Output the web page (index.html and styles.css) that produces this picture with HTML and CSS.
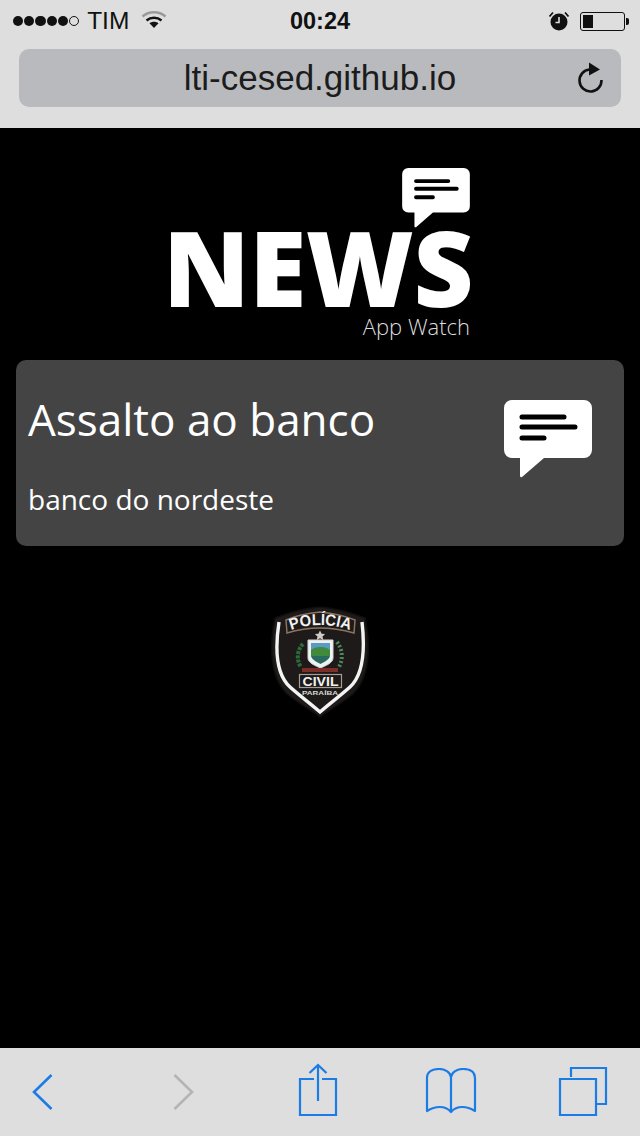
FILE: index.html
```html
<!DOCTYPE html>
<html lang="pt">
<head>
<meta charset="utf-8">
<title>News App Watch</title>
<link rel="stylesheet" href="styles.css">
</head>
<body>
<div class="page">
  <header class="chrome">
    <div class="status">
      <div class="status-left">
        <span class="signal"><i></i><i></i><i></i><i></i><i></i><i class="off"></i></span>
        <span class="carrier">TIM</span>
        <svg class="wifi" width="26" height="20" viewBox="0 0 26 20"><path d="M1.500 6.500C8 .9 18 .9 24.500 6.500" fill="none" stroke="#9a9a9a" stroke-width="2.400"/><path d="M5.500 10.500C9.800 6.800 16.200 6.800 20.500 10.500" fill="none" stroke="#111" stroke-width="2.400"/><path d="M8.500 13.200C11 11.200 15 11.200 17.500 13.200L13 18Z" fill="#111"/></svg>
      </div>
      <div class="time">00:24</div>
      <div class="status-right">
        <svg width="22" height="22" viewBox="0 0 22 22"><circle cx="11" cy="12" r="8.500" fill="#111"/><path d="M11 7v5.500H7.500" fill="none" stroke="#dedede" stroke-width="1.600"/><path d="M1.500 6.500 5 2.500M20.500 6.500 17 2.500" stroke="#111" stroke-width="1.800"/></svg>
        <div class="battery"><div class="battery-level"></div></div>
      </div>
    </div>
    <div class="urlbar">
      <span class="url">lti-cesed.github.io</span>
      <svg class="reload" width="30" height="34" viewBox="0 0 30 34"><path d="M13.500 9.500A11 11 0 1 0 25.500 20" fill="none" stroke="#111" stroke-width="2.600"/><path d="M13 2.500 24 9.500 13 15.500Z" fill="#111"/></svg>
    </div>
  </header>

  <main class="content">
    <div class="logo">
      <svg class="logo-bubble" width="68" height="60" viewBox="0 0 88 78"><path d="M8 0H80a8 8 0 0 1 8 8V50a8 8 0 0 1-8 8H40L18 77a1.500 1.500 0 0 1-2-1V58H8a8 8 0 0 1-8-8V8a8 8 0 0 1 8-8Z" fill="#fff"/><path d="M18 17H60M18 27H71M18 38H40" stroke="#000" stroke-width="5" stroke-linecap="round"/></svg>
      <div class="logo-word">NEWS</div>
      <div class="logo-sub">App Watch</div>
    </div>

    <section class="card">
      <div class="card-text">
        <h1 class="card-title">Assalto ao banco</h1>
        <p class="card-desc">banco do nordeste</p>
      </div>
      <svg class="card-icon" width="88" height="78" viewBox="0 0 88 78"><path d="M8 0H80a8 8 0 0 1 8 8V50a8 8 0 0 1-8 8H40L18 77a1.500 1.500 0 0 1-2-1V58H8a8 8 0 0 1-8-8V8a8 8 0 0 1 8-8Z" fill="#fff"/><path d="M18 17H60M18 27H71M18 38H40" stroke="#000" stroke-width="5" stroke-linecap="round"/></svg>
    </section>

    <svg class="badge" width="100" height="112" viewBox="0 0 100 112">
      <path d="M50 1C65 2 80 6 95 12C101 40 100 72 83 88C72 97 60 104 50 111C40 104 28 97 17 88C0 72 -1 40 5 12C20 6 35 2 50 1Z" fill="#1d1a19" stroke="#0e0e0e" stroke-width="1.500"/>
      <path d="M9 16C5 42 6 68 20 81C30 90 41 98 50 106C59 98 70 90 80 81C94 68 95 42 92 16" fill="none" stroke="#f4f4f4" stroke-width="3.400"/>
      <path d="M16 14C27 9 39 7 50 6C61 7 73 9 85 14L84 27C73 24 61 22 50 22C39 22 27 24 17 27Z" fill="#1d1a19" stroke="#8a7460" stroke-width="1.500"/>
      <path id="badge-arc" d="M19 25C29 20.500 40 19 50 19C60 19 71 20.500 82 25" fill="none"/>
      <text class="badge-top" text-anchor="middle"><textPath href="#badge-arc" startOffset="50%" textLength="60" lengthAdjust="spacingAndGlyphs">POLÍCIA</textPath></text>
      <path d="M50 24.500l1.600 3.200 3.500.4-2.600 2.400.8 3.500-3.300-1.800-3.300 1.800.8-3.500-2.600-2.400 3.500-.4Z" fill="#d2c9c2"/>
      <path d="M33 38C27 44 26 54 31 61" fill="none" stroke="#2c6b3c" stroke-width="4" stroke-dasharray="3 1.200"/>
      <path d="M67 36C73 44 73 54 69 61" fill="none" stroke="#4d8a5c" stroke-width="4" stroke-dasharray="2 2"/>
      <path d="M38 34H63V52C63 57 55 60 50.500 62C46 60 38 57 38 52Z" fill="#eef2f3" stroke="#d6d6d6" stroke-width="1"/>
      <path d="M41 37H60V44H41Z" fill="#5a9bc4"/>
      <path d="M41 44C45 40 56 40 60 44V50H41Z" fill="#3f8a3c"/>
      <path d="M41 50H60C59 54 54 56 50.500 58C47 56 42 54 41 50Z" fill="#2a6b60"/>
      <path d="M32 62H68V66H32Z" fill="#7c2e28"/>
      <rect x="29.500" y="68.500" width="42" height="13" fill="#1d1a19" stroke="#a89d92" stroke-width="1.200"/>
      <text class="badge-mid" x="50.500" y="79.500" text-anchor="middle" textLength="36" lengthAdjust="spacingAndGlyphs">CIVIL</text>
      <text class="badge-low" x="50" y="89" text-anchor="middle" textLength="36" lengthAdjust="spacingAndGlyphs">PARAÍBA</text>
    </svg>
  </main>

  <nav class="toolbar">
    <svg width="24" height="40" viewBox="0 0 24 40"><path d="M20.500 3 3 20 20.500 37" fill="none" stroke="#1c7ce6" stroke-width="2.600"/></svg>
    <svg width="24" height="40" viewBox="0 0 24 40"><path d="M3.500 3 21 20 3.500 37" fill="none" stroke="#b4b4b4" stroke-width="2.600"/></svg>
    <svg width="40" height="58" viewBox="0 0 40 58"><path d="M16 16H2V52H38V16H24M20 38V2M11.500 10 20 2 28.500 10" fill="none" stroke="#1c7ce6" stroke-width="2.200"/></svg>
    <svg width="52" height="48" viewBox="0 0 52 48"><path d="M26 44C20 37 10 38 2 43V10C2 3 8 1 14 1C20 1 25 4 26 9C27 4 32 1 38 1C44 1 50 3 50 10V43C42 38 32 37 26 44ZM26 9V44" fill="none" stroke="#1c7ce6" stroke-width="2.200" stroke-linejoin="round"/></svg>
    <svg width="50" height="50" viewBox="0 0 50 50"><path d="M13 10V1H48V37H38" fill="none" stroke="#1c7ce6" stroke-width="2.200"/><path d="M2 12H38V48H2Z" fill="none" stroke="#1c7ce6" stroke-width="2.200"/></svg>
  </nav>
</div>
</body>
</html>
```
FILE: styles.css
```css
* { box-sizing: border-box; }
html, body { margin: 0; padding: 0; }
body { background: #000; font-family: "Liberation Sans", Arial, sans-serif; }
.page { display: flex; flex-direction: column; width: 640px; height: 1136px; overflow: hidden; }

.chrome { height: 128px; background: #dedede; padding: 0 19px; flex: none; }
.status { display: flex; align-items: center; justify-content: space-between; height: 42px; margin: 0 -6px; color: #111; }
.status-left { display: flex; align-items: center; gap: 8px; width: 200px; }
.signal { display: flex; gap: 1px; }
.signal i { width: 10.200px; height: 10.200px; border-radius: 50%; background: #111; }
.signal i.off { background: none; border: 1px solid #111; }
.carrier { font-size: 24.500px; margin-right: 4px; }
.wifi { margin-top: -2px; }
.time { font-size: 23.500px; font-weight: 700; }
.status-right { display: flex; align-items: center; justify-content: flex-end; gap: 10px; width: 200px; padding-right: 2px; }
.battery { position: relative; width: 45px; height: 19px; border: 1px solid #111; border-radius: 3px; padding: 2px; }
.battery::after { content: ""; position: absolute; right: -5px; top: 5px; width: 3px; height: 7px; background: #111; border-radius: 0 2px 2px 0; }
.battery-level { width: 10px; height: 13px; background: #111; }

.urlbar { position: relative; display: flex; align-items: center; justify-content: center; height: 58px; margin-top: 7px; background: #b9babd; border-radius: 10px; }
.url { font-size: 35px; color: #1c1c1c; }
.reload { position: absolute; right: 15px; top: 11px; }

.content { flex: 1; display: flex; flex-direction: column; align-items: center; background: #000; padding: 40px 16px 0; }
.logo { position: relative; width: 300px; height: 192px; color: #fff; text-align: right; flex: none; }
.logo-bubble { position: absolute; right: 0; top: 0; }
.logo-word { font-family: "Open Sans", sans-serif; font-weight: 800; font-size: 104px; line-height: 84px; padding-top: 57px; margin-left: -7px; letter-spacing: -.5px; white-space: nowrap; text-align: left; }
.logo-sub { font-family: "Open Sans", sans-serif; font-weight: 300; font-size: 22px; line-height: 28px; color: #ddd; margin-top: 3px; }

.card { display: flex; align-items: flex-start; justify-content: space-between; width: 608px; height: 186px; background: #444; border-radius: 10px; padding: 38px 32px 0 12px; flex: none; color: #fff; font-family: "Open Sans", sans-serif; }
.card-title { margin: 0; font-size: 44px; font-weight: 400; line-height: 42px; }
.card-desc { margin: 39px 0 0; font-size: 28px; line-height: 40px; }
.card-icon { margin-top: 2px; }

.badge { margin-top: 60px; flex: none; }
.badge-top { font: 700 16px "Liberation Sans", sans-serif; fill: #f2f2f2; }
.badge-mid { font: 700 12px "Liberation Sans", sans-serif; fill: #f2f2f2; }
.badge-low { font: 700 6px "Liberation Sans", sans-serif; fill: #d8d8d8; }

.toolbar { display: grid; grid-template-columns: 140px 127px 127px 133px 50px; align-items: center; height: 88px; background: #dedede; padding-left: 31px; flex: none; }
```
